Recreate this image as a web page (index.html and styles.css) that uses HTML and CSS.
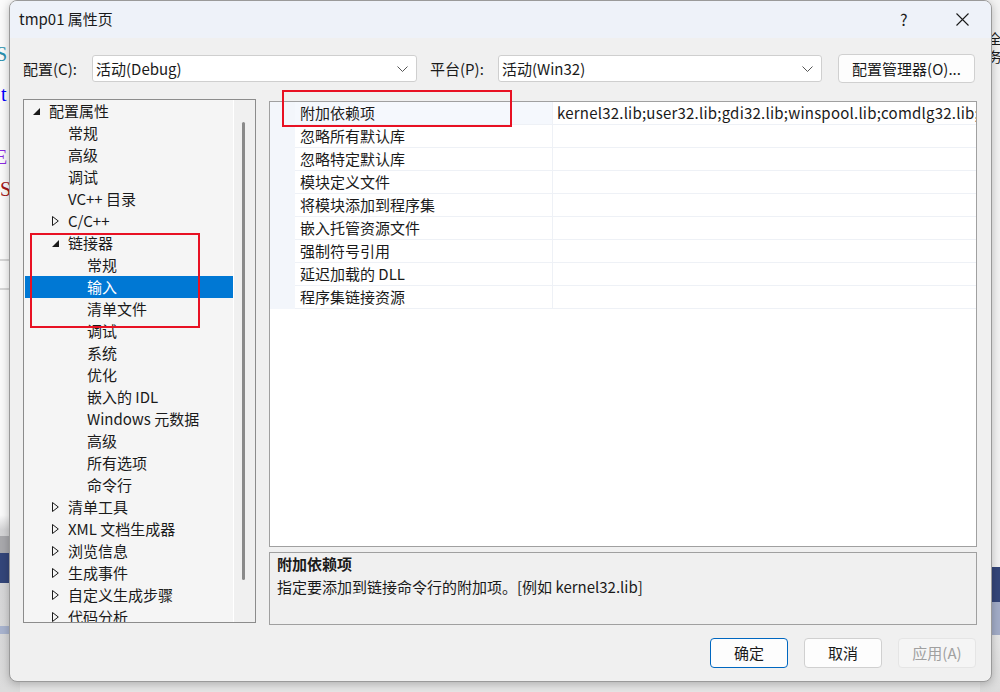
FILE: index.html
```html
<!DOCTYPE html>
<html lang="zh-CN">
<head>
<meta charset="utf-8">
<title>tmp01 属性页</title>
<link rel="stylesheet" href="styles.css">
</head>
<body>
<div class="desktop">
  <div class="editor-left">
    <span class="frag f-s1">S</span>
    <span class="frag f-t">t</span>
    <span class="frag f-e">E</span>
    <span class="frag f-s2">S</span>
    <div class="hline h1"></div>
    <div class="hline h2"></div>
    <div class="band-gray"></div>
    <div class="band-dark"></div>
    <div class="band-light"></div>
  </div>
  <div class="editor-right">
    <span class="frag f-r1">全</span>
    <span class="frag f-r2">务</span>
    <div class="band-dark r"></div>
    <div class="band-light r"></div>
  </div>
</div>

<div class="dialog">
  <div class="titlebar">
    <span class="title">tmp01 属性页</span>
    <span class="help">?</span>
    <span class="close"><svg width="13" height="13" viewBox="0 0 13 13"><path d="M0.5 0.5 L12.5 12.5 M12.5 0.5 L0.5 12.5" stroke="#1a1a1a" stroke-width="1.1" fill="none"/></svg></span>
  </div>

  <div class="content">
    <div class="config-row">
      <span class="lbl lbl1">配置(C):</span>
      <div class="combo c1"><span>活动(Debug)</span><svg class="chev" width="11" height="6" viewBox="0 0 11 6"><path d="M0.5 0.5 L5.5 5.5 L10.5 0.5" stroke="#555" stroke-width="1" fill="none"/></svg></div>
      <span class="lbl lbl2">平台(P):</span>
      <div class="combo c2"><span>活动(Win32)</span><svg class="chev" width="11" height="6" viewBox="0 0 11 6"><path d="M0.5 0.5 L5.5 5.5 L10.5 0.5" stroke="#555" stroke-width="1" fill="none"/></svg></div>
      <button class="btn cfgmgr">配置管理器(O)...</button>
    </div>

    <div class="main">
      <div class="tree">
        <div class="tree-list">
          <div class="row l0"><span class="tw"><svg width="7" height="7" viewBox="0 0 7 7"><polygon points="7,0 7,7 0,7" fill="#1a1a1a"/></svg></span>配置属性</div>
          <div class="row l1"><span class="tw"></span>常规</div>
          <div class="row l1"><span class="tw"></span>高级</div>
          <div class="row l1"><span class="tw"></span>调试</div>
          <div class="row l1"><span class="tw"></span>VC++ 目录</div>
          <div class="row l1"><span class="tw"><svg width="7" height="10" viewBox="0 0 7 10"><polygon points="0.5,0.5 6.3,5 0.5,9.5" fill="none" stroke="#1a1a1a" stroke-width="1"/></svg></span>C/C++</div>
          <div class="row l1"><span class="tw"><svg width="7" height="7" viewBox="0 0 7 7"><polygon points="7,0 7,7 0,7" fill="#1a1a1a"/></svg></span>链接器</div>
          <div class="row l2"><span class="tw"></span>常规</div>
          <div class="row l2 sel"><span class="tw"></span>输入</div>
          <div class="row l2"><span class="tw"></span>清单文件</div>
          <div class="row l2"><span class="tw"></span>调试</div>
          <div class="row l2"><span class="tw"></span>系统</div>
          <div class="row l2"><span class="tw"></span>优化</div>
          <div class="row l2"><span class="tw"></span>嵌入的 IDL</div>
          <div class="row l2"><span class="tw"></span>Windows 元数据</div>
          <div class="row l2"><span class="tw"></span>高级</div>
          <div class="row l2"><span class="tw"></span>所有选项</div>
          <div class="row l2"><span class="tw"></span>命令行</div>
          <div class="row l1"><span class="tw"><svg width="7" height="10" viewBox="0 0 7 10"><polygon points="0.5,0.5 6.3,5 0.5,9.5" fill="none" stroke="#1a1a1a" stroke-width="1"/></svg></span>清单工具</div>
          <div class="row l1"><span class="tw"><svg width="7" height="10" viewBox="0 0 7 10"><polygon points="0.5,0.5 6.3,5 0.5,9.5" fill="none" stroke="#1a1a1a" stroke-width="1"/></svg></span>XML 文档生成器</div>
          <div class="row l1"><span class="tw"><svg width="7" height="10" viewBox="0 0 7 10"><polygon points="0.5,0.5 6.3,5 0.5,9.5" fill="none" stroke="#1a1a1a" stroke-width="1"/></svg></span>浏览信息</div>
          <div class="row l1"><span class="tw"><svg width="7" height="10" viewBox="0 0 7 10"><polygon points="0.5,0.5 6.3,5 0.5,9.5" fill="none" stroke="#1a1a1a" stroke-width="1"/></svg></span>生成事件</div>
          <div class="row l1"><span class="tw"><svg width="7" height="10" viewBox="0 0 7 10"><polygon points="0.5,0.5 6.3,5 0.5,9.5" fill="none" stroke="#1a1a1a" stroke-width="1"/></svg></span>自定义生成步骤</div>
          <div class="row l1"><span class="tw"><svg width="7" height="10" viewBox="0 0 7 10"><polygon points="0.5,0.5 6.3,5 0.5,9.5" fill="none" stroke="#1a1a1a" stroke-width="1"/></svg></span>代码分析</div>
        </div>
        <div class="vscroll"><div class="thumb"></div></div>
      </div>

      <div class="right">
        <div class="grid">
          <div class="grow"><div class="gut"></div><div class="name">附加依赖项</div><div class="val">kernel32.lib;user32.lib;gdi32.lib;winspool.lib;comdlg32.lib;advapi32.lib</div></div>
          <div class="grow"><div class="gut"></div><div class="name">忽略所有默认库</div><div class="val"></div></div>
          <div class="grow"><div class="gut"></div><div class="name">忽略特定默认库</div><div class="val"></div></div>
          <div class="grow"><div class="gut"></div><div class="name">模块定义文件</div><div class="val"></div></div>
          <div class="grow"><div class="gut"></div><div class="name">将模块添加到程序集</div><div class="val"></div></div>
          <div class="grow"><div class="gut"></div><div class="name">嵌入托管资源文件</div><div class="val"></div></div>
          <div class="grow"><div class="gut"></div><div class="name">强制符号引用</div><div class="val"></div></div>
          <div class="grow"><div class="gut"></div><div class="name">延迟加载的 DLL</div><div class="val"></div></div>
          <div class="grow"><div class="gut"></div><div class="name">程序集链接资源</div><div class="val"></div></div>
        </div>
        <div class="desc">
          <div class="desc-title">附加依赖项</div>
          <div class="desc-text">指定要添加到链接命令行的附加项。[例如 kernel32.lib]</div>
        </div>
      </div>
    </div>

    <div class="buttons">
      <button class="btn ok">确定</button>
      <button class="btn">取消</button>
      <button class="btn disabled">应用(A)</button>
    </div>
  </div>

  <div class="mark mark1"></div>
  <div class="mark mark2"></div>
</div>
</body>
</html>
```
FILE: styles.css
```css
html, body {
  margin: 0;
  padding: 0;
}
body {
  width: 1000px;
  height: 692px;
  overflow: hidden;
  position: relative;
  background: #e6e6e6;
  font-family: "Noto Sans CJK SC", "Noto Sans", sans-serif;
  font-size: 15px;
  color: #1a1a1a;
}

/* ---------- desktop behind the dialog ---------- */
.desktop {
  position: absolute;
  inset: 0;
}
.editor-left {
  position: absolute;
  left: 0;
  top: 0;
  width: 20px;
  height: 692px;
  background: linear-gradient(#fbfbfb 0, #fbfbfb 515px, #d4d4d6 530px, #dcdcdc 692px);
}
.editor-right {
  position: absolute;
  right: 0;
  top: 0;
  width: 20px;
  height: 692px;
  background: linear-gradient(#f3f3f3 0, #f3f3f3 560px, #dcdcdc 692px);
}
.frag {
  position: absolute;
  font-family: "Liberation Serif", serif;
  font-size: 20px;
  line-height: 20px;
}
.f-s1 { left: -4px; top: 44px; color: #2b91af; }
.f-t { left: 1px; top: 84px; color: #0000ff; }
.f-e { left: -5px; top: 147px; color: #8a2be2; }
.f-s2 { left: 0px; top: 179px; color: #a31515; }
.f-r1 { left: 8px; top: 28px; font-family: "Noto Sans CJK SC", sans-serif; font-size: 14px; color: #1a1a1a; }
.f-r2 { left: 8px; top: 46px; font-family: "Noto Sans CJK SC", sans-serif; font-size: 14px; color: #1a1a1a; }
.hline {
  position: absolute;
  left: 0;
  width: 20px;
  height: 2px;
  background: #d6d6d6;
}
.h1 { top: 259px; }
.h2 { top: 288px; }
.band-gray {
  position: absolute;
  left: 0;
  top: 536px;
  width: 20px;
  height: 17px;
  background: #a9a9ad;
}
.band-dark {
  position: absolute;
  left: 0;
  top: 553px;
  width: 20px;
  height: 30px;
  background: #34467a;
}
.band-light {
  position: absolute;
  left: 0;
  top: 626px;
  width: 20px;
  height: 8px;
  background: #a9b4cf;
}
.band-dark.r { top: 567px; height: 35px; background: #34467a; }
.band-light.r { top: 602px; height: 33px; background: #a3adc8; }

/* ---------- dialog window ---------- */
.dialog {
  position: absolute;
  left: 9px;
  top: 0;
  width: 981px;
  height: 680px;
  background: #f0f0f0;
  border: 1px solid #9a9a9a;
  border-radius: 8px;
  box-shadow: 0 2px 10px rgba(0, 0, 0, 0.25);
  overflow: hidden;
}
.titlebar {
  height: 37px;
  background: #eef2f9;
  display: flex;
  align-items: center;
  position: relative;
}
.title {
  margin-left: 9px;
  line-height: 20px;
  margin-top: -2px;
}
.help {
  position: absolute;
  left: 890px;
  top: 7px;
  font-size: 16px;
  line-height: 22px;
}
.close {
  position: absolute;
  left: 946px;
  top: 12px;
  width: 13px;
  height: 13px;
  display: block;
}
.close svg { display: block; }

.content {
  padding: 0 0 0 13px;
}

/* ---------- config row ---------- */
.config-row {
  display: flex;
  align-items: center;
  margin-top: 16px;
  height: 29px;
}
.lbl {
  line-height: 20px;
  white-space: nowrap;
}
.lbl1 { width: 69px; }
.lbl2 { width: 68px; margin-left: 13px; }
.combo {
  box-sizing: border-box;
  height: 27px;
  background: #fff;
  border: 1px solid #cfcfcf;
  border-radius: 3px;
  display: flex;
  align-items: center;
  justify-content: space-between;
  padding: 0 8px 0 3px;
  line-height: 20px;
}
.c1 { width: 325px; }
.c2 { width: 324px; }
.chev { display: block; }

.btn {
  box-sizing: border-box;
  font-family: inherit;
  font-size: 15px;
  color: #1a1a1a;
  background: #fdfdfd;
  border: 1px solid #d0d0d0;
  border-radius: 4px;
  height: 30px;
  width: 78px;
  padding: 0;
  line-height: 20px;
}
.cfgmgr {
  width: 137px;
  height: 29px;
  margin-left: 16px;
}

/* ---------- main area ---------- */
.main {
  display: flex;
  align-items: flex-start;
  margin-top: 16px;
}
.tree {
  box-sizing: border-box;
  width: 233px;
  height: 524px;
  border: 1px solid #8c8c8c;
  background: #f5f5f5;
  display: flex;
  overflow: hidden;
}
.tree-list {
  width: 209px;
  overflow: hidden;
  border-right: 1px solid #ffffff;
}
.row {
  height: 22px;
  line-height: 21px;
  padding-bottom: 1px;
  box-sizing: border-box;
  display: flex;
  align-items: center;
  white-space: nowrap;
}
.row.l0 { padding-left: 9px; }
.row.l1 { padding-left: 28px; }
.row.l2 { padding-left: 47px; }
.tw {
  width: 16px;
  flex: none;
  display: flex;
  align-items: center;
}
.tw svg { display: block; }
.row.l0 .tw svg, .row.l1 .tw svg[height="7"] { margin-top: 2px; }
.row.sel {
  background: #0078d4;
  color: #fff;
  margin-left: 1px;
  padding-left: 46px;
}
.vscroll {
  flex: 1;
  background: #f0f0f0;
  position: relative;
}
.thumb {
  position: absolute;
  left: 8px;
  top: 22px;
  width: 3px;
  height: 458px;
  border-radius: 2px;
  background: #8a8a8a;
}

.right {
  margin-left: 13px;
  margin-top: 2px;
  width: 708px;
}
.grid {
  box-sizing: border-box;
  height: 446px;
  border: 1px solid #a0a0a0;
  background: #fff;
  overflow: hidden;
}
.grow {
  display: flex;
  height: 23px;
}
.gut {
  width: 25px;
  flex: none;
  background: #f3f6fb;
}
.name {
  box-sizing: border-box;
  width: 258px;
  flex: none;
  padding-left: 5px;
  line-height: 22px;
  border-bottom: 1px solid #eef1f6;
  border-right: 1px solid #eef1f6;
  white-space: nowrap;
}
.val {
  box-sizing: border-box;
  flex: 1;
  padding-left: 4px;
  line-height: 22px;
  letter-spacing: 0.22px;
  border-bottom: 1px solid #eef1f6;
  white-space: nowrap;
  overflow: hidden;
}
.grow:first-child .name { background: #f5f8fd; }

.desc {
  box-sizing: border-box;
  margin-top: 5px;
  height: 73px;
  border: 1px solid #a0a0a0;
  background: #f0f0f0;
  padding: 1px 0 0 7px;
}
.desc-title {
  font-weight: bold;
  line-height: 20px;
}
.desc-text {
  line-height: 20px;
  margin-top: 3px;
}

.buttons {
  display: flex;
  justify-content: flex-end;
  gap: 16px;
  margin-top: 13px;
  padding-right: 15px;
}
.btn.ok {
  border-color: #0067c0;
  background: #fdfdfd;
}
.btn.disabled {
  color: #a0a0a0;
  background: #f5f5f5;
  border-color: #e5e5e5;
}

/* ---------- red annotation boxes ---------- */
.mark {
  position: absolute;
  border: 2px solid #e81123;
  box-sizing: border-box;
}
.mark1 { left: 20px; top: 232px; width: 170px; height: 95px; }
.mark2 { left: 272px; top: 89px; width: 230px; height: 37px; }
```
